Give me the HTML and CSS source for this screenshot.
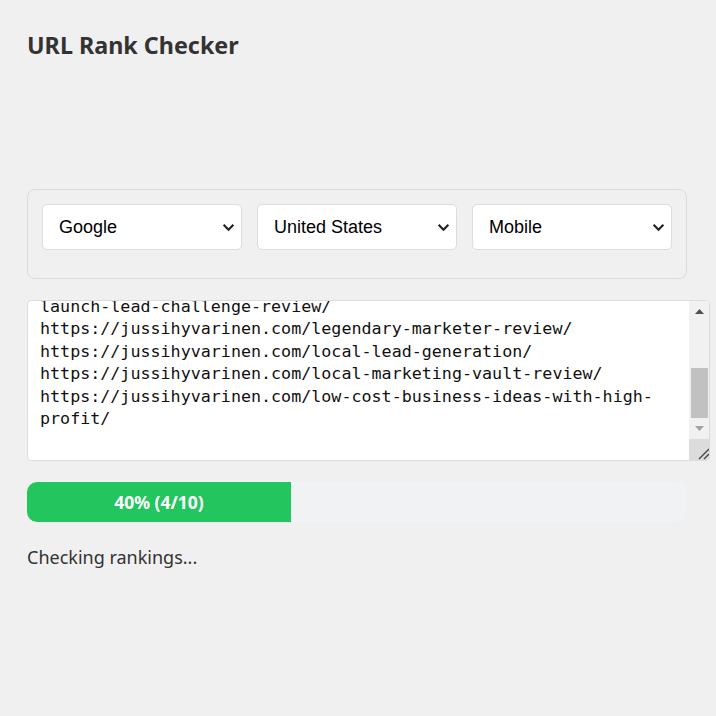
FILE: index.html
```html
<!DOCTYPE html>
<html lang="en">
<head>
  <meta charset="UTF-8">
  <meta name="viewport" content="width=device-width, initial-scale=1">
  <title>URL Rank Checker</title>
  <link rel="stylesheet" href="styles.css">
</head>
<body>

  <div class="app">
    <h1>URL Rank Checker</h1>

    <div class="options">
      <div class="select-wrap">
        <select name="engine">
          <option>Google</option>
          <option>Bing</option>
        </select>
        <svg class="chevron" viewBox="0 0 12 8"><path d="M1.5 1.5 L6 6 L10.5 1.5"/></svg>
      </div>
      <div class="select-wrap">
        <select name="country">
          <option>United States</option>
          <option>United Kingdom</option>
        </select>
        <svg class="chevron" viewBox="0 0 12 8"><path d="M1.5 1.5 L6 6 L10.5 1.5"/></svg>
      </div>
      <div class="select-wrap">
        <select name="device">
          <option>Mobile</option>
          <option>Desktop</option>
        </select>
        <svg class="chevron" viewBox="0 0 12 8"><path d="M1.5 1.5 L6 6 L10.5 1.5"/></svg>
      </div>
    </div>

    <div class="urls-wrap">
      <textarea id="urls" class="urls" spellcheck="false">https://jussihyvarinen.com/affiliate-marketing-for-beginners-step-by-step-guide/
https://jussihyvarinen.com/best-ai-writing-tools/
https://jussihyvarinen.com/clickfunnels-vs-systeme-io-which-funnel-builder-is-better/
https://jussihyvarinen.com/how-to-start-a-blog-and-make-money-online-in-2024/
https://jussihyvarinen.com/is-wealthy-affiliate-legit/
https://jussihyvarinen.com/kevin-david-affiliate-marketing-launch-lead-challenge-review/
https://jussihyvarinen.com/legendary-marketer-review/
https://jussihyvarinen.com/local-lead-generation/
https://jussihyvarinen.com/local-marketing-vault-review/
https://jussihyvarinen.com/low-cost-business-ideas-with-high-profit/
</textarea>
      <div class="scrollbar">
        <div class="sb-btn">
          <svg viewBox="0 0 9 5"><path d="M0 5 L4.5 0 L9 5Z" fill="#505050"/></svg>
        </div>
        <div class="sb-track">
          <div class="sb-thumb"></div>
        </div>
        <div class="sb-btn">
          <svg viewBox="0 0 9 5"><path d="M0 0 L4.5 5 L9 0Z" fill="#a3a3a3"/></svg>
        </div>
        <div class="sb-corner">
          <svg viewBox="0 0 21 21"><path d="M10 20 L20 10 M15 20 L20 15" stroke="#444" stroke-width="1.4"/></svg>
        </div>
      </div>
    </div>

    <div class="progress">
      <div class="progress-fill" style="width: 40%">40% (4/10)</div>
    </div>

    <p class="status">Checking rankings...</p>
  </div>

  <script src="script.js"></script>
</body>
</html>
```

FILE: styles.css
```css
body {
  margin: 0;
  background-color: #f0f0f0;
  font-family: 'Noto Sans', 'Open Sans', sans-serif;
  color: #333;
}

.app {
  width: 660px;
  padding: 29px 27px;
}

h1 {
  margin: 0 0 128px;
  font-size: 23.3px;
  font-weight: bold;
  color: #333;
}

.options {
  display: grid;
  grid-template-columns: repeat(3, 1fr);
  gap: 15px;
  padding: 14px 14px 28px;
  border: 1px solid #dcdcdc;
  border-radius: 8px;
}

.select-wrap {
  position: relative;
}

select {
  appearance: none;
  -webkit-appearance: none;
  width: 100%;
  height: 46px;
  padding: 0 36px 0 16px;
  background-color: #fff;
  border: 1px solid #dcdcdc;
  border-radius: 5px;
  font-family: 'Liberation Sans', Arial, sans-serif;
  font-size: 18px;
  color: #000;
  outline: none;
}

.chevron {
  position: absolute;
  right: 7px;
  top: 19px;
  width: 13px;
  height: 9px;
  pointer-events: none;
  fill: none;
  stroke: #222;
  stroke-width: 2;
}

.urls-wrap {
  position: relative;
  width: 683px;
  margin-top: 21px;
}

.urls {
  display: block;
  box-sizing: border-box;
  width: 100%;
  height: 161px;
  padding: 12px 32px 12px 12px;
  background-color: #fff;
  border: 1px solid #dcdcdc;
  border-radius: 4px;
  font-family: 'DejaVu Sans Mono', monospace;
  font-size: 16.7px;
  line-height: 22.5px;
  color: #111;
  resize: none;
  overflow: hidden;
  outline: none;
}

/* classic scrollbar drawn over the textarea's right edge */
.scrollbar {
  position: absolute;
  top: 1px;
  right: 1px;
  bottom: 1px;
  width: 20px;
  display: flex;
  flex-direction: column;
  background-color: #f1f1f1;
  border-radius: 0 3px 3px 0;
  overflow: hidden;
}

.sb-btn {
  height: 21px;
  display: flex;
  align-items: center;
  justify-content: center;
}

.sb-btn svg {
  width: 9px;
  height: 5px;
}

.sb-track {
  flex: 1;
  display: flex;
  flex-direction: column;
  justify-content: flex-end;
}

.sb-thumb {
  height: 50px;
  margin: 0 1px 0 2px;
  background-color: #c1c1c1;
}

.sb-corner {
  height: 21px;
  background-color: #dcdcdc;
}

.sb-corner svg {
  display: block;
  width: 21px;
  height: 21px;
}

.progress {
  height: 40px;
  margin-top: 21px;
  background-color: #f1f2f4;
  border-radius: 10px;
  overflow: hidden;
}

.progress-fill {
  height: 100%;
  display: flex;
  align-items: center;
  justify-content: center;
  background-color: #22c55e;
  color: #fff;
  font-weight: bold;
  font-size: 17.5px;
}

.status {
  margin: 23px 0 0;
  font-size: 18px;
  color: #333;
}
```

FILE: script.js
```js
const urls = document.getElementById("urls");

urls.scrollTop = 221;
```
